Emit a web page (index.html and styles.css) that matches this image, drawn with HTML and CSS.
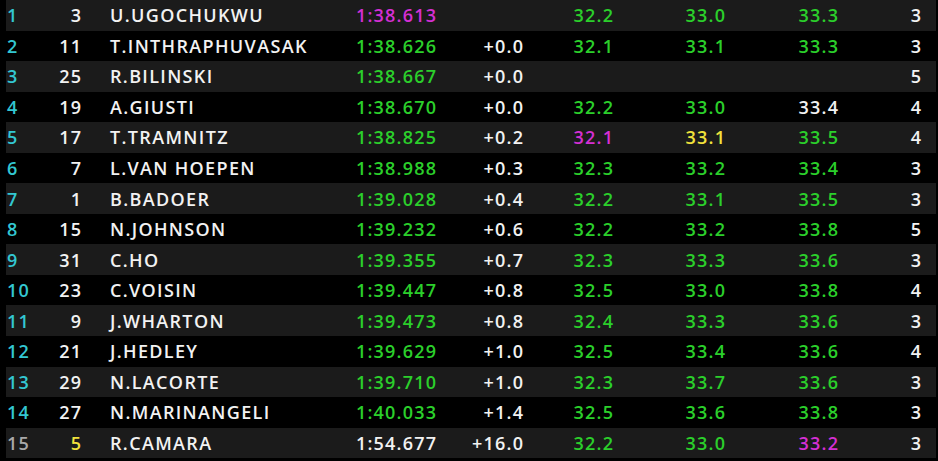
FILE: index.html
```html
<!DOCTYPE html>
<html lang="en">
<head>
    <meta charset="UTF-8">
    <meta name="viewport" content="width=device-width, initial-scale=1.0">
    <title>Timing</title>
    <link rel="stylesheet" href="styles.css">
</head>
<body>
    <div class="timing">
        <div class="row"><span class="pos">1</span><span class="car">3</span><span class="name">U.UGOCHUKWU</span><span class="time best">1:38.613</span><span class="gap"></span><span class="sec pb">32.2</span><span class="sec pb">33.0</span><span class="sec pb">33.3</span><span class="laps">3</span></div>
        <div class="row"><span class="pos">2</span><span class="car">11</span><span class="name">T.INTHRAPHUVASAK</span><span class="time pb">1:38.626</span><span class="gap">+0.0</span><span class="sec pb">32.1</span><span class="sec pb">33.1</span><span class="sec pb">33.3</span><span class="laps">3</span></div>
        <div class="row"><span class="pos">3</span><span class="car">25</span><span class="name">R.BILINSKI</span><span class="time pb">1:38.667</span><span class="gap">+0.0</span><span class="sec"></span><span class="sec"></span><span class="sec"></span><span class="laps">5</span></div>
        <div class="row"><span class="pos">4</span><span class="car">19</span><span class="name">A.GIUSTI</span><span class="time pb">1:38.670</span><span class="gap">+0.0</span><span class="sec pb">32.2</span><span class="sec pb">33.0</span><span class="sec">33.4</span><span class="laps">4</span></div>
        <div class="row"><span class="pos">5</span><span class="car">17</span><span class="name">T.TRAMNITZ</span><span class="time pb">1:38.825</span><span class="gap">+0.2</span><span class="sec best">32.1</span><span class="sec slow">33.1</span><span class="sec pb">33.5</span><span class="laps">4</span></div>
        <div class="row"><span class="pos">6</span><span class="car">7</span><span class="name">L.VAN HOEPEN</span><span class="time pb">1:38.988</span><span class="gap">+0.3</span><span class="sec pb">32.3</span><span class="sec pb">33.2</span><span class="sec pb">33.4</span><span class="laps">3</span></div>
        <div class="row"><span class="pos">7</span><span class="car">1</span><span class="name">B.BADOER</span><span class="time pb">1:39.028</span><span class="gap">+0.4</span><span class="sec pb">32.2</span><span class="sec pb">33.1</span><span class="sec pb">33.5</span><span class="laps">3</span></div>
        <div class="row"><span class="pos">8</span><span class="car">15</span><span class="name">N.JOHNSON</span><span class="time pb">1:39.232</span><span class="gap">+0.6</span><span class="sec pb">32.2</span><span class="sec pb">33.2</span><span class="sec pb">33.8</span><span class="laps">5</span></div>
        <div class="row"><span class="pos">9</span><span class="car">31</span><span class="name">C.HO</span><span class="time pb">1:39.355</span><span class="gap">+0.7</span><span class="sec pb">32.3</span><span class="sec pb">33.3</span><span class="sec pb">33.6</span><span class="laps">3</span></div>
        <div class="row"><span class="pos">10</span><span class="car">23</span><span class="name">C.VOISIN</span><span class="time pb">1:39.447</span><span class="gap">+0.8</span><span class="sec pb">32.5</span><span class="sec pb">33.0</span><span class="sec pb">33.8</span><span class="laps">4</span></div>
        <div class="row"><span class="pos">11</span><span class="car">9</span><span class="name">J.WHARTON</span><span class="time pb">1:39.473</span><span class="gap">+0.8</span><span class="sec pb">32.4</span><span class="sec pb">33.3</span><span class="sec pb">33.6</span><span class="laps">3</span></div>
        <div class="row"><span class="pos">12</span><span class="car">21</span><span class="name">J.HEDLEY</span><span class="time pb">1:39.629</span><span class="gap">+1.0</span><span class="sec pb">32.5</span><span class="sec pb">33.4</span><span class="sec pb">33.6</span><span class="laps">4</span></div>
        <div class="row"><span class="pos">13</span><span class="car">29</span><span class="name">N.LACORTE</span><span class="time pb">1:39.710</span><span class="gap">+1.0</span><span class="sec pb">32.3</span><span class="sec pb">33.7</span><span class="sec pb">33.6</span><span class="laps">3</span></div>
        <div class="row"><span class="pos">14</span><span class="car">27</span><span class="name">N.MARINANGELI</span><span class="time pb">1:40.033</span><span class="gap">+1.4</span><span class="sec pb">32.5</span><span class="sec pb">33.6</span><span class="sec pb">33.8</span><span class="laps">3</span></div>
        <div class="row"><span class="pos out">15</span><span class="car slow">5</span><span class="name">R.CAMARA</span><span class="time">1:54.677</span><span class="gap">+16.0</span><span class="sec pb">32.2</span><span class="sec pb">33.0</span><span class="sec best">33.2</span><span class="laps">3</span></div>
    </div>
</body>
</html>
```

FILE: styles.css
```css
body {
    margin: 0;
    padding: 0;
    background-color: #000;
    font-family: "Open Sans", "DejaVu Sans", sans-serif;
    font-weight: 600;
    font-size: 18px;
    color: #f2f2f2;
}

.timing {
    width: 930px;
    margin-left: 6px;
}

.row {
    display: grid;
    grid-template-columns: 31px 44px 259px 96px 87px 90px 112px 113px 83px;
    align-items: center;
    height: 30.55px;
    letter-spacing: 1.2px;
}

.row:nth-child(odd) {
    background-color: #1b1b1b;
}

.row span {
    white-space: nowrap;
    line-height: 1;
}

.pos {
    padding-left: 1px;
    color: #33c7d2;
}

.pos.out {
    color: #a9a9a9;
}

.car,
.time,
.gap,
.sec,
.laps {
    text-align: right;
    margin-right: -1.2px; /* cancel trailing letter-spacing */
}

.name {
    padding-left: 29px;
    letter-spacing: 1.35px;
}

.pb {
    color: #2bcf2b;
}

.best {
    color: #d42fd4;
}

.slow {
    color: #f1e23c;
}
```
